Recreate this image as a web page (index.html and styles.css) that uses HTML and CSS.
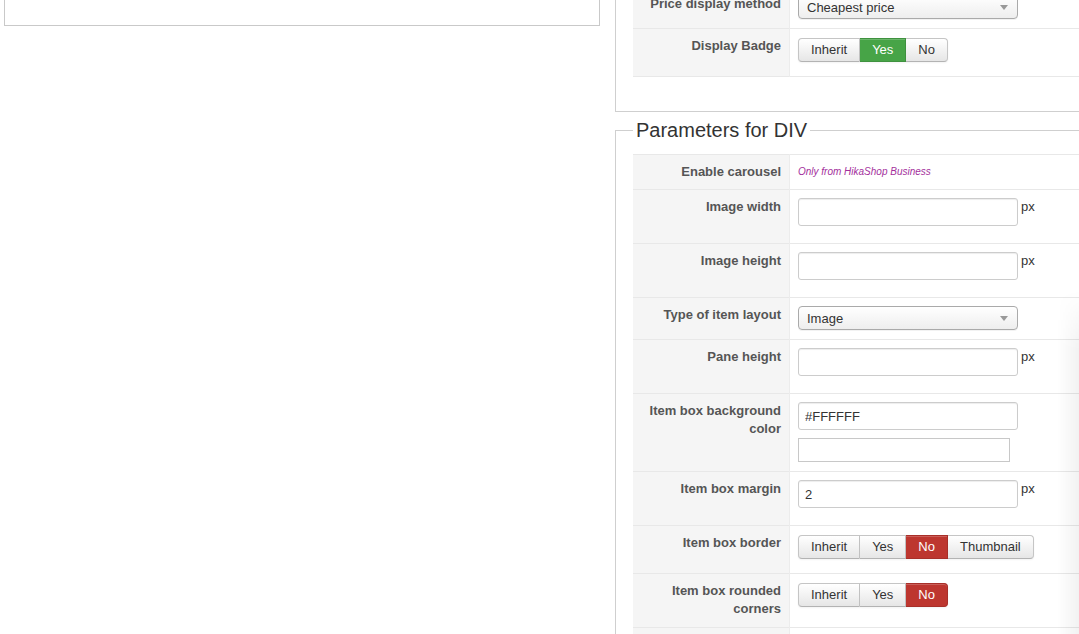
FILE: index.html
```html
<!DOCTYPE html>
<html lang="en">
<head>
  <meta charset="UTF-8">
  <meta name="viewport" content="width=device-width, initial-scale=1.0">
  <title>Module options</title>
  <link rel="stylesheet" href="styles.css">
</head>
<body>
<div class="page">
  <div class="side-box"></div>

  <div class="settings">
    <fieldset class="params">
      <table class="param-table">
        <tr>
          <td class="key">Price display method</td>
          <td>
            <div class="field">
              <div class="select-wrap"><select class="select"><option>Cheapest price</option></select></div>
            </div>
          </td>
        </tr>
        <tr>
          <td class="key">Display Badge</td>
          <td>
            <div class="field">
              <div class="btn-group">
                <button class="btn">Inherit</button>
                <button class="btn btn-success">Yes</button>
                <button class="btn">No</button>
              </div>
            </div>
          </td>
        </tr>
      </table>
    </fieldset>

    <fieldset class="params">
      <legend>Parameters for DIV</legend>
      <table class="param-table">
        <tr>
          <td class="key">Enable carousel</td>
          <td><div class="field"><span class="business-only">Only from HikaShop Business</span></div></td>
        </tr>
        <tr>
          <td class="key">Image width</td>
          <td><div class="field"><input type="text" class="input" value=""><span class="unit">px</span></div></td>
        </tr>
        <tr>
          <td class="key">Image height</td>
          <td><div class="field"><input type="text" class="input" value=""><span class="unit">px</span></div></td>
        </tr>
        <tr>
          <td class="key">Type of item layout</td>
          <td>
            <div class="field">
              <div class="select-wrap"><select class="select"><option>Image</option></select></div>
            </div>
          </td>
        </tr>
        <tr>
          <td class="key">Pane height</td>
          <td><div class="field"><input type="text" class="input" value=""><span class="unit">px</span></div></td>
        </tr>
        <tr>
          <td class="key">Item box background color</td>
          <td>
            <div class="field field-stack">
              <input type="text" class="input" value="#FFFFFF">
              <input type="text" class="input-color" value="">
            </div>
          </td>
        </tr>
        <tr>
          <td class="key">Item box margin</td>
          <td><div class="field"><input type="text" class="input" value="2"><span class="unit">px</span></div></td>
        </tr>
        <tr>
          <td class="key">Item box border</td>
          <td>
            <div class="field">
              <div class="btn-group">
                <button class="btn">Inherit</button>
                <button class="btn">Yes</button>
                <button class="btn btn-danger">No</button>
                <button class="btn">Thumbnail</button>
              </div>
            </div>
          </td>
        </tr>
        <tr>
          <td class="key key-tall">Item box rounded corners</td>
          <td>
            <div class="field">
              <div class="btn-group">
                <button class="btn">Inherit</button>
                <button class="btn">Yes</button>
                <button class="btn btn-danger">No</button>
              </div>
            </div>
          </td>
        </tr>
        <tr class="row-next">
          <td class="key">Text center</td>
          <td>
            <div class="field">
              <div class="btn-group">
                <button class="btn">Inherit</button>
                <button class="btn">Yes</button>
                <button class="btn">No</button>
              </div>
            </div>
          </td>
        </tr>
      </table>
    </fieldset>
  </div>
</div>

<div class="edge-shade"></div>
</body>
</html>
```

FILE: styles.css
```css
/* Body */
body {
  margin: 0;
  font-family: "Liberation Sans", Arial, sans-serif;
  font-size: 13px;
  line-height: 18px;
  color: #333;
  background-color: #fff;
  overflow: hidden;
}

/* Page columns */
.page {
  display: flex;
  align-items: flex-start;
  gap: 15px;
  margin-top: -27px;
  padding-left: 4px;
}

.side-box {
  box-sizing: border-box;
  width: 596px;
  height: 53px;
  border: 1px solid #c9c9c9;
  flex-shrink: 0;
}

.settings {
  width: 500px;
  flex-shrink: 0;
}

/* Fieldsets */
.params {
  margin: 0;
  padding: 12px 17px 34px;
  border: 1px solid #cfcfcf;
  min-width: 0;
}

.params + .params {
  margin-top: 6px;
}

.params legend {
  padding: 0 3px;
  font-size: 20px;
  line-height: 24px;
  color: #333;
}

/* Parameter table */
.param-table {
  width: 100%;
  border-collapse: collapse;
  border-bottom: 1px solid #e8e8e8;
}

.param-table td {
  padding: 8px;
  border-top: 1px solid #e8e8e8;
  vertical-align: top;
}

.param-table td.key {
  width: 140px;
  background-color: #f5f5f5;
  border-right: 1px solid #ececec;
  text-align: right;
  font-weight: bold;
  color: #555;
}

.param-table td.key-tall {
  padding-bottom: 9px;
}

.row-next td {
  padding-top: 10px;
}

.field {
  display: flex;
  align-items: flex-start;
}

.field-stack {
  flex-direction: column;
  gap: 8px;
}

/* Inputs */
.input {
  box-sizing: border-box;
  width: 220px;
  height: 28px;
  margin: 0 0 9px;
  padding: 4px 6px;
  border: 1px solid #ccc;
  border-radius: 3px;
  box-shadow: inset 0 1px 1px rgba(0, 0, 0, 0.075);
  font-family: inherit;
  font-size: 13px;
  color: #333;
}

.field-stack .input {
  margin-bottom: 0;
}

.input-color {
  box-sizing: border-box;
  width: 212px;
  height: 24px;
  margin: 0 0 1px;
  padding: 2px 6px;
  border: 1px solid #c8c8c8;
  border-radius: 0;
  font-family: inherit;
  font-size: 13px;
}

.unit {
  margin-left: 3px;
  color: #333;
}

/* Select */
.select-wrap {
  position: relative;
  margin-bottom: 1px;
}

.select {
  box-sizing: border-box;
  width: 220px;
  height: 24px;
  padding: 0 8px;
  border: 1px solid #aaa;
  border-radius: 4px;
  background: linear-gradient(#ffffff, #eeeeee);
  box-shadow: 0 1px 0 rgba(0, 0, 0, 0.05);
  font-family: inherit;
  font-size: 13px;
  color: #333;
  appearance: none;
  -webkit-appearance: none;
}

.select-wrap::after {
  content: "";
  position: absolute;
  right: 10px;
  top: 10px;
  border-left: 4px solid transparent;
  border-right: 4px solid transparent;
  border-top: 5px solid #999;
  pointer-events: none;
}

/* Radio buttons */
.btn-group {
  display: flex;
  margin: 1px 0 6px;
}

.btn {
  padding: 2px 12px;
  border: 1px solid #c5c5c5;
  border-bottom-color: #b3b3b3;
  border-left-width: 0;
  background: linear-gradient(#ffffff, #e6e6e6);
  box-shadow: inset 0 1px 0 rgba(255, 255, 255, 0.2), 0 1px 2px rgba(0, 0, 0, 0.05);
  font-family: inherit;
  font-size: 13px;
  line-height: 18px;
  color: #333;
  cursor: pointer;
}

.btn:first-child {
  border-left-width: 1px;
  border-radius: 4px 0 0 4px;
}

.btn:last-child {
  border-radius: 0 4px 4px 0;
}

.btn-success {
  background: #47a447;
  border-color: #3f923f;
  color: #fff;
}

.btn-danger {
  background: #bd362f;
  border-color: #a82f29;
  color: #fff;
}

/* Carousel note */
.business-only {
  font-size: 10px;
  font-style: italic;
  color: #a32f9c;
}

/* Soft shade along the right edge */
.edge-shade {
  position: fixed;
  top: 290px;
  right: 0;
  bottom: 0;
  width: 22px;
  background: linear-gradient(to right, rgba(0, 0, 0, 0), rgba(0, 0, 0, 0.05));
  -webkit-mask-image: linear-gradient(rgba(0, 0, 0, 0), #000 60px);
  mask-image: linear-gradient(rgba(0, 0, 0, 0), #000 60px);
  pointer-events: none;
}
```
